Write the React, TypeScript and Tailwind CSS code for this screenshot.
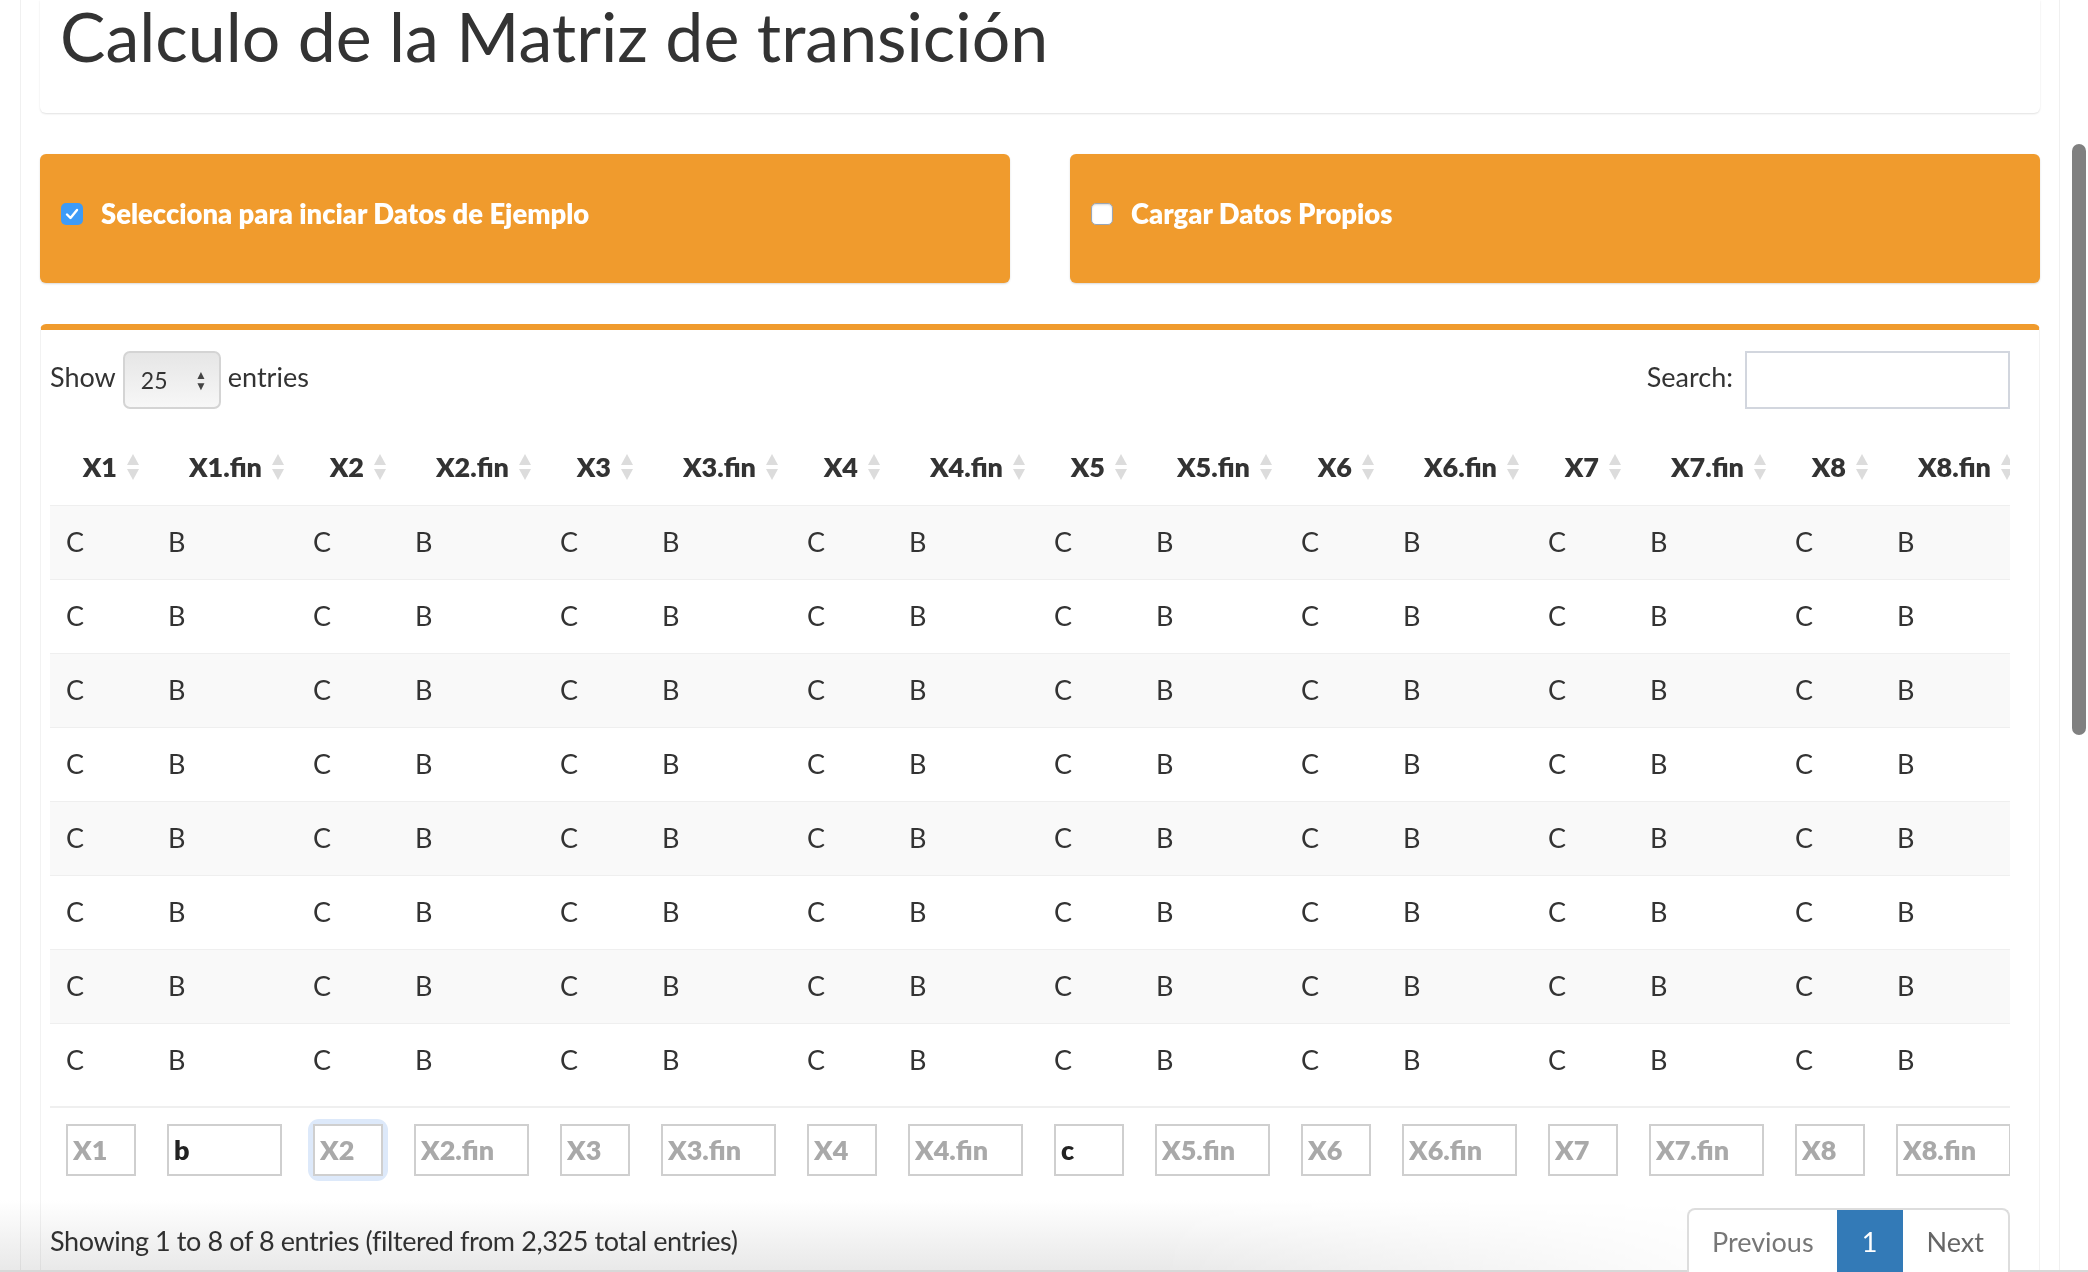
const pairs = [1, 2, 3, 4, 5, 6, 7, 8];
const rows = [1, 2, 3, 4, 5, 6, 7, 8];

function SortArrows() {
  return (
    <svg width="14" height="30" viewBox="0 0 14 30" className="absolute right-[12px] top-1/2 -translate-y-1/2">
      <path d="M7 2 L13 13 H1 Z" fill="#dcdcdc" />
      <path d="M7 28 L13 17 H1 Z" fill="#dcdcdc" />
    </svg>
  );
}

function Check({ on }: { on: boolean }) {
  if (on) {
    return (
      <span className="flex h-[22px] w-[22px] shrink-0 items-center justify-center rounded-[5px] bg-[#3e9bf7]">
        <svg width="14" height="12" viewBox="0 0 14 12">
          <path d="M2 6.5 L5.5 10 L12 2" stroke="white" strokeWidth="2.4" fill="none" strokeLinecap="round" strokeLinejoin="round" />
        </svg>
      </span>
    );
  }
  return <span className="h-[22px] w-[22px] shrink-0 rounded-[5px] border border-[#9aa6b6] bg-white shadow-[inset_0_1px_2px_rgba(0,0,0,0.15)]" />;
}

function FilterInput({ label, value, wide, focused }: { label: string; value?: string; wide?: boolean; focused?: boolean }) {
  return (
    <td className={wide ? "px-[15px] pt-[16px] pb-[16px]" : "px-[16px] pt-[16px] pb-[16px]"}>
      <div className={focused ? "rounded-[6px] ring-[5px] ring-[#dde9fa]" : ""}>
        <div className="flex h-[52px] items-center border-2 border-[#cfcfcf] bg-white pl-[5px] text-[27px] font-[800]">
          {value ? <span className="text-[#222]">{value}</span> : <span className="text-[#a9a9a9]">{label}</span>}
        </div>
      </div>
    </td>
  );
}

export default function App() {
  return (
    <div className="relative h-[1272px] w-full overflow-hidden bg-white font-['Lato',sans-serif] text-[#333]">
      <div className="flex">
        <div className="w-[20px] shrink-0" />
        <main className="w-[2040px] shrink-0 border-x border-[#f0f0f0] px-[19px]">
          {/* title box */}
          <div className="h-[113px] rounded-b-[6px] bg-white shadow-[0_1px_2px_rgba(0,0,0,0.12)]">
            <h1 className="pl-[20px] pt-[2px] text-[68px] leading-none text-[#333]">
              Calculo de la Matriz de transición
            </h1>
          </div>

          {/* option boxes */}
          <div className="mt-[41px] grid grid-cols-2 gap-[60px]">
            <div className="flex h-[129px] items-center gap-[18px] rounded-[6px] bg-[#f09b2d] pb-[9px] pl-[21px] shadow-[0_1px_2px_rgba(0,0,0,0.15)]">
              <Check on />
              <span className="text-[27.4px] font-[800] text-white">Selecciona para inciar Datos de Ejemplo</span>
            </div>
            <div className="flex h-[129px] items-center gap-[18px] rounded-[6px] bg-[#f09b2d] pb-[9px] pl-[21px] shadow-[0_1px_2px_rgba(0,0,0,0.15)]">
              <Check on={false} />
              <span className="text-[27.4px] font-[800] text-white">Cargar Datos Propios</span>
            </div>
          </div>

          {/* table box */}
          <div className="mt-[41px] rounded-t-[6px] border-x border-t-[6px] border-x-[#f2f2f2] border-t-[#f09b2d] bg-white px-[9px]">
            <div className="flex items-center justify-between pr-[20px] pt-[21px]">
              <div className="flex items-center text-[27px]">
                <span className="-mt-[6px]">Show</span>
                <div className="mx-[7px] flex h-[58px] w-[98px] items-center justify-between rounded-[7px] border-2 border-[#d4d4d4] bg-linear-to-b from-[#e6e6e6] to-[#f7f7f7] pl-[16px] pr-[12px]">
                  <span className="text-[23px]">25</span>
                  <span className="flex flex-col items-center text-[12px] leading-[11px] text-[#444]">
                    <span>▲</span>
                    <span>▼</span>
                  </span>
                </div>
                <span className="-mt-[6px]">entries</span>
              </div>
              <div className="flex items-center gap-[12px] text-[27px]">
                <span className="-mt-[6px]">Search:</span>
                <div className="h-[58px] w-[265px] border-2 border-[#d2d6de] bg-white" />
              </div>
            </div>

            <div className="mt-[21px] w-[1960px] overflow-hidden">
              <table className="w-[1976px] table-fixed border-collapse">
                <colgroup>
                  {pairs.map((p) => [<col key={"a" + p} className="w-[102px]" />, <col key={"b" + p} className="w-[145px]" />])}
                </colgroup>
                <thead>
                  <tr className="h-[75px]">
                    {pairs.map((p) => [
                      <th key={"a" + p} className="relative pr-[35px] text-right text-[27px] font-[800]">
                        {"X" + p}
                        <SortArrows />
                      </th>,
                      <th key={"b" + p} className="relative pr-[35px] text-right text-[27px] font-[800]">
                        {"X" + p + ".fin"}
                        <SortArrows />
                      </th>,
                    ])}
                  </tr>
                </thead>
                <tbody>
                  {rows.map((r) => (
                    <tr key={r} className={r % 2 === 1 ? "h-[74px] border-t border-[#efefef] bg-[#f9f9f9]" : "h-[74px] border-t border-[#efefef] bg-white"}>
                      {pairs.map((p) => [
                        <td key={"a" + p} className="pl-[16px] text-[27px]">C</td>,
                        <td key={"b" + p} className="pl-[16px] text-[27px]">B</td>,
                      ])}
                    </tr>
                  ))}
                  <tr className="h-[10px]" />
                </tbody>
                <tfoot className="border-t-2 border-[#efefef]">
                  <tr>
                    <FilterInput label="X1" />
                    <FilterInput label="X1.fin" value="b" wide />
                    <FilterInput label="X2" focused />
                    <FilterInput label="X2.fin" wide />
                    <FilterInput label="X3" />
                    <FilterInput label="X3.fin" wide />
                    <FilterInput label="X4" />
                    <FilterInput label="X4.fin" wide />
                    <FilterInput label="X5" value="c" />
                    <FilterInput label="X5.fin" wide />
                    <FilterInput label="X6" />
                    <FilterInput label="X6.fin" wide />
                    <FilterInput label="X7" />
                    <FilterInput label="X7.fin" wide />
                    <FilterInput label="X8" />
                    <FilterInput label="X8.fin" wide />
                  </tr>
                </tfoot>
              </table>
            </div>

            <div className="mt-[16px] flex items-start justify-between pr-[20px]">
              <p className="pt-[13px] text-[27px] tracking-[-0.4px]">Showing 1 to 8 of 8 entries (filtered from 2,325 total entries)</p>
              <div className="relative z-10 flex h-[70px] overflow-hidden rounded-t-[8px] border-2 border-b-0 border-[#dddddd] bg-white text-[27px]">
                <span className="px-[23px] pt-[12px] text-[#777]">Previous</span>
                <span className="w-[66px] bg-[#337ab7] pt-[12px] text-center text-white">1</span>
                <span className="px-[24px] pt-[12px] text-[#666]">Next</span>
              </div>
            </div>
          </div>
        </main>
        <div className="w-[28px] shrink-0 pl-[12px] pt-[144px]">
          <div className="h-[591px] w-[14px] rounded-full bg-[#808080]" />
        </div>
      </div>

      {/* bottom window shade */}
      <div className="pointer-events-none absolute bottom-0 left-0 h-[72px] w-[1780px] bg-linear-to-b from-white to-[#e8e8e8] mix-blend-multiply [mask-image:linear-gradient(to_right,black_65%,transparent)]" />
      <div className="absolute bottom-0 left-0 h-[2px] w-full bg-[#d8d8d8]" />
    </div>
  );
}
